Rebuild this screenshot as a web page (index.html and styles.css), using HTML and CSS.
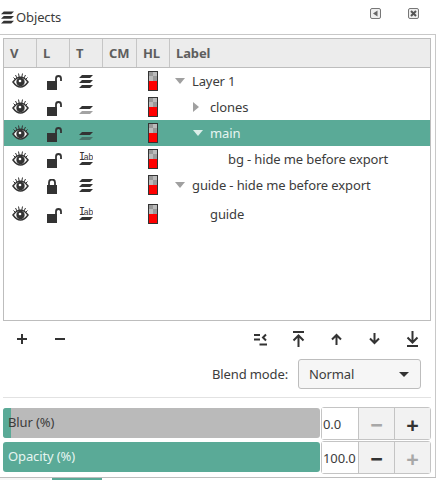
FILE: index.html
```html
<!DOCTYPE html>
<html>
<head>
    <title>Objects</title>
    <link rel="stylesheet" href="styles.css">
</head>
<body>
    <svg class="defs" width="0" height="0">
        <symbol id="eye" viewBox="0 1 17 16">
            <path d="M1 10C3.500 6.500 6 5.200 8.500 5.200s5 1.300 7.500 4.800c-2.500 3.500-5 5-7.500 5s-5-1.500-7.500-5z" fill="#fff" stroke="#333" stroke-width="1.500"/>
            <circle cx="8.500" cy="10" r="4.200" fill="#333"/>
            <circle cx="8" cy="9" r="1.300" fill="#fff"/>
            <path d="M1.500 5.500 3.500 7.500M3.500 3 5 6M6.500 1.500 7.200 5M10.500 1.500 9.800 5M13.500 3 12 6M15.500 5.500 13.500 7.500" stroke="#333" stroke-width="1" fill="none"/>
        </symbol>
        <symbol id="lock-open" viewBox="0 0 15 15">
            <path d="M0 6h10v9H0z" fill="#333"/>
            <path d="M9 7V3.500a2.500 2.500 0 0 1 5 0V6" fill="none" stroke="#333" stroke-width="1.800"/>
        </symbol>
        <symbol id="lock" viewBox="0 0 15 15">
            <path d="M0 6h10v9H0z" fill="#333"/>
            <path d="M2 7V3.500a3 3 0 0 1 6 0V7" fill="none" stroke="#333" stroke-width="1.800"/>
        </symbol>
        <symbol id="layer" viewBox="0 0 14 14">
            <path d="M3 1h11l-3 3H0zM3 6h11l-3 3H0zM3 11h11l-3 3H0z" fill="#333"/>
        </symbol>
        <symbol id="group" viewBox="0 0 14 14">
            <path d="M3 6h11l-3 3H0z" fill="#333"/>
            <path d="M3 11h11l-3 3H0z" fill="#333" fill-opacity=".45"/>
        </symbol>
        <symbol id="hl" viewBox="0 0 10 20">
            <path d="M0 0h10v20H0z" fill="#333"/>
            <path d="M1 1h8v9H1z" fill="#bbb"/>
            <path d="M1 1h4v4H1zM5 5h4v5H5z" fill="#999"/>
            <path d="M1 10h8v9H1z" fill="#f00"/>
        </symbol>
    </svg>

    <div class="dialog">
        <div class="titlebar">
            <div class="title">
                <svg class="title-icon"><use href="#layer"/></svg>
                <span>Objects</span>
            </div>
            <div class="title-buttons">
                <svg width="11" height="11" viewBox="0 0 11 11"><rect x=".5" y=".5" width="10" height="10" rx="1.500" fill="#eee" stroke="#777"/><path d="M7.500 2.500v6L3 5.500z" fill="#666"/></svg>
                <svg width="11" height="11" viewBox="0 0 11 11"><rect x=".5" y=".5" width="10" height="10" rx="1.500" fill="#eee" stroke="#777"/><path d="M3 3l5 5M8 3l-5 5" stroke="#555" stroke-width="2"/></svg>
            </div>
        </div>

        <div class="content">
            <div class="tree">
                <div class="tree-head">
                    <div>V</div><div>L</div><div>T</div><div>CM</div><div>HL</div><div>Label</div>
                </div>

                <div class="row">
                    <svg class="ic-eye"><use href="#eye"/></svg>
                    <svg class="ic-lock"><use href="#lock-open"/></svg>
                    <svg class="ic-type"><use href="#layer"/></svg>
                    <span></span>
                    <svg class="ic-hl"><use href="#hl"/></svg>
                    <div class="label depth-0"><i class="arrow-down"></i>Layer 1</div>
                </div>
                <div class="row">
                    <svg class="ic-eye"><use href="#eye"/></svg>
                    <svg class="ic-lock"><use href="#lock-open"/></svg>
                    <svg class="ic-type"><use href="#group"/></svg>
                    <span></span>
                    <svg class="ic-hl"><use href="#hl"/></svg>
                    <div class="label depth-1"><i class="arrow-right"></i>clones</div>
                </div>
                <div class="row selected">
                    <svg class="ic-eye"><use href="#eye"/></svg>
                    <svg class="ic-lock"><use href="#lock-open"/></svg>
                    <svg class="ic-type"><use href="#group"/></svg>
                    <span></span>
                    <svg class="ic-hl"><use href="#hl"/></svg>
                    <div class="label depth-1"><i class="arrow-down"></i>main</div>
                </div>
                <div class="row">
                    <svg class="ic-eye"><use href="#eye"/></svg>
                    <svg class="ic-lock"><use href="#lock-open"/></svg>
                    <svg class="ic-type" viewBox="0 0 14 16"><text x="0" y="9" class="text-i">I</text><text x="4.800" y="9" class="text-ab">ab</text><path d="M3 11h11l-3 3H0z" fill="#333"/></svg>
                    <span></span>
                    <svg class="ic-hl"><use href="#hl"/></svg>
                    <div class="label depth-2">bg - hide me before export</div>
                </div>
                <div class="row">
                    <svg class="ic-eye"><use href="#eye"/></svg>
                    <svg class="ic-lock"><use href="#lock"/></svg>
                    <svg class="ic-type"><use href="#layer"/></svg>
                    <span></span>
                    <svg class="ic-hl"><use href="#hl"/></svg>
                    <div class="label depth-0"><i class="arrow-down"></i>guide - hide me before export</div>
                </div>
                <div class="row tall">
                    <svg class="ic-eye"><use href="#eye"/></svg>
                    <svg class="ic-lock"><use href="#lock-open"/></svg>
                    <svg class="ic-type" viewBox="0 0 14 16"><text x="0" y="9" class="text-i">I</text><text x="4.800" y="9" class="text-ab">ab</text><path d="M3 11h11l-3 3H0z" fill="#333"/></svg>
                    <span></span>
                    <svg class="ic-hl"><use href="#hl"/></svg>
                    <div class="label depth-3">guide</div>
                </div>
            </div>

            <div class="toolbar">
                <div class="tools-left">
                    <svg width="10" height="10" viewBox="0 0 10 10"><path d="M5 0v10M0 5h10" stroke="#333" stroke-width="2"/></svg>
                    <svg width="10" height="10" viewBox="0 0 10 10"><path d="M0 5h10" stroke="#333" stroke-width="2"/></svg>
                </div>
                <div class="tools-right">
                    <svg width="13" height="13" viewBox="0 0 13 13"><path d="M0 2h6M0 6.500h6M5.500 11.500H13" stroke="#333" stroke-width="2" fill="none"/><path d="M12 1.500 9 4.500l3 3" stroke="#333" stroke-width="2" fill="none"/></svg>
                    <svg width="13" height="16" viewBox="0 0 13 16"><path d="M1 1h11" stroke="#333" stroke-width="2"/><path d="M6.500 16V5M1.500 9.500l5-5 5 5" stroke="#333" stroke-width="2" fill="none"/></svg>
                    <svg width="13" height="12" viewBox="0 0 13 12"><path d="M6.500 12V2M2 6.500l4.500-4.500L11 6.500" stroke="#333" stroke-width="2" fill="none"/></svg>
                    <svg width="13" height="12" viewBox="0 0 13 12"><path d="M6.500 0v10M2 5.500 6.500 10 11 5.500" stroke="#333" stroke-width="2" fill="none"/></svg>
                    <svg width="13" height="16" viewBox="0 0 13 16"><path d="M1 15h11" stroke="#333" stroke-width="2"/><path d="M6.500 0v11M1.500 6.500l5 5 5-5" stroke="#333" stroke-width="2" fill="none"/></svg>
                </div>
            </div>

            <div class="blend-row">
                <label>Blend mode:</label>
                <div class="combo">
                    <span>Normal</span>
                    <i class="combo-arrow"></i>
                </div>
            </div>

            <div class="sep"></div>

            <div class="sliders">
                <div class="slider-row">
                    <div class="scale">
                        <div class="scale-fill" style="width: 2.500%"></div>
                        <span class="scale-label">Blur (%)</span>
                    </div>
                    <div class="spin">
                        <div class="spin-value">0.0</div>
                        <div class="spin-btn dim">&minus;</div>
                        <div class="spin-btn">+</div>
                    </div>
                </div>
                <div class="slider-row">
                    <div class="scale">
                        <div class="scale-fill" style="width: 100%"></div>
                        <span class="scale-label on">Opacity (%)</span>
                    </div>
                    <div class="spin">
                        <div class="spin-value">100.0</div>
                        <div class="spin-btn">&minus;</div>
                        <div class="spin-btn dim">+</div>
                    </div>
                </div>
            </div>
        </div>

        <div class="tabs">
            <div class="tab"></div>
            <div class="tab active"></div>
        </div>
    </div>
</body>
</html>
```

FILE: styles.css
```css
html, body {
    margin: 0;
    height: 100%;
    overflow: hidden;
}

body {
    font-family: "Noto Sans", sans-serif;
    font-size: 13px;
    letter-spacing: -0.12px;
    color: #3c3c3c;
    background-color: #fff;
}

.defs {
    position: absolute;
}

.text-i {
    font-family: "DejaVu Sans Mono", monospace;
    font-size: 10px;
    fill: #333;
}

.text-ab {
    font-family: "Liberation Sans", sans-serif;
    font-size: 8.500px;
    letter-spacing: 0;
    fill: #333;
}

.dialog {
    width: 436px;
    height: 480px;
    display: flex;
    flex-direction: column;
}

.titlebar {
    height: 35px;
    display: flex;
    justify-content: space-between;
    align-items: center;
    box-sizing: border-box;
    padding: 0 17px 0 1px;
    border-bottom: 1px solid #c8c8c8;
}

.title {
    display: flex;
    align-items: center;
    gap: 2px;
    font-size: 13px;
}

.title-icon {
    width: 13px;
    height: 14px;
}

.title-buttons {
    display: flex;
    gap: 27px;
    margin-bottom: 8px;
}

.content {
    flex: 1;
    box-sizing: border-box;
    padding: 3px 4px 0 3px;
    border-right: 1px solid #c8c8c8;
}

.tree {
    height: 283px;
    box-sizing: border-box;
    border: 1px solid #bdbdbd;
}

.tree-head, .row {
    display: grid;
    grid-template-columns: 33px 33px 33px 34px 33px 1fr;
}

.tree-head {
    height: 29px;
    box-sizing: border-box;
    background-color: #ececec;
    border-bottom: 1px solid #bdbdbd;
    font-weight: bold;
    color: #5e5e5e;
}

.tree-head div {
    display: flex;
    align-items: center;
    padding-left: 6px;
    border-right: 1px solid #c6c6c6;
}

.tree-head div:last-child {
    border-right: none;
}

.row {
    height: 26px;
    align-items: center;
}

.row.tall {
    height: 32px;
}

.row.selected {
    background-color: #5aaa97;
    color: #e6f5f1;
}

.ic-eye {
    width: 17px;
    height: 16px;
    margin-left: 8px;
}

.ic-lock {
    width: 15px;
    height: 15px;
    margin: 2px 0 0 10px;
}

.ic-type {
    width: 14px;
    height: 16px;
    margin-left: 9px;
}

.ic-hl {
    width: 10px;
    height: 20px;
    margin-left: 11px;
}

.label {
    display: flex;
    align-items: center;
    white-space: nowrap;
}

.depth-0 { padding-left: 5px; }
.depth-1 { padding-left: 23px; }
.depth-2 { padding-left: 58px; }
.depth-3 { padding-left: 40px; }

.arrow-down {
    width: 0;
    height: 0;
    border-left: 5px solid transparent;
    border-right: 5px solid transparent;
    border-top: 6px solid #a0a0a0;
    margin-right: 7px;
}

.selected .arrow-down {
    border-top-color: #dceee9;
}

.arrow-right {
    width: 0;
    height: 0;
    border-top: 5px solid transparent;
    border-bottom: 5px solid transparent;
    border-left: 6px solid #a0a0a0;
    margin-right: 11px;
}

.toolbar {
    display: flex;
    justify-content: space-between;
    align-items: center;
    height: 36px;
    padding: 0 14px;
}

.tools-left, .tools-right {
    display: flex;
    align-items: center;
}

.tools-left {
    gap: 28px;
}

.tools-right {
    gap: 25px;
    margin-right: -2px;
}

.blend-row {
    display: flex;
    justify-content: flex-end;
    align-items: center;
    gap: 10px;
    height: 30px;
    margin: 2px 10px 0 0;
}

.combo {
    width: 123px;
    height: 30px;
    box-sizing: border-box;
    display: flex;
    justify-content: space-between;
    align-items: center;
    padding: 0 11px 0 10px;
    background-color: #f6f6f6;
    border: 1px solid #bdbdbd;
    border-radius: 3px;
}

.combo-arrow {
    width: 0;
    height: 0;
    border-left: 5px solid transparent;
    border-right: 5px solid transparent;
    border-top: 5px solid #333;
}

.sep {
    border-top: 1px solid #e2e2e2;
    margin-top: 8px;
}

.sliders {
    margin-top: 9px;
}

.slider-row {
    display: flex;
    align-items: stretch;
    height: 33px;
    margin-bottom: 1px;
}

.scale {
    position: relative;
    width: 317px;
    margin: 1px 1px 2px 0;
    background-color: #bababa;
    border-radius: 3px;
    overflow: hidden;
}

.scale-fill {
    height: 100%;
    background-color: #5aaa97;
}

.scale-label {
    position: absolute;
    left: 5px;
    top: 5px;
}

.scale-label.on {
    color: #e6f5f1;
}

.spin {
    flex: 1;
    display: flex;
    border: 1px solid #c4c4c4;
    border-radius: 3px;
    box-sizing: border-box;
}

.spin-value {
    width: 36px;
    display: flex;
    align-items: center;
    padding-left: 1px;
    box-sizing: border-box;
    background-color: #fff;
}

.spin-btn {
    flex: 1;
    display: flex;
    justify-content: center;
    align-items: center;
    border-left: 1px solid #c4c4c4;
    background-color: #f2f2f2;
    font-size: 22px;
    font-weight: bold;
    line-height: 1;
    color: #333;
}

.spin-btn.dim {
    color: #a8a8a8;
}

.tabs {
    display: flex;
    height: 2px;
    border-top: 1px solid #bdbdbd;
    gap: 2px;
}

.tab {
    width: 50px;
    background-color: #f6f6f6;
}

.tab.active {
    background-color: #5aaa97;
}
```
